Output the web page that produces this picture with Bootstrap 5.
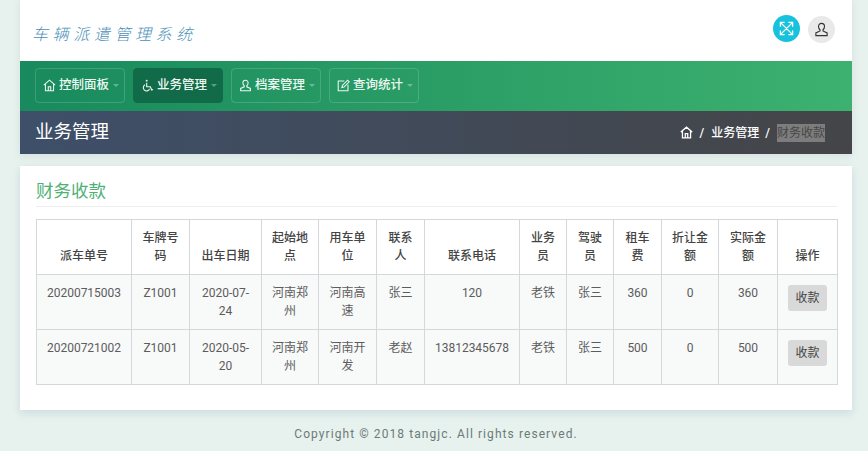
<!DOCTYPE html>
<html lang="zh-CN">

<head>
    <meta charset="UTF-8">
    <meta name="viewport" content="width=device-width, initial-scale=1.0">
    <title>财务收款</title>
    <link href="https://cdn.jsdelivr.net/npm/bootstrap@5.3.0/dist/css/bootstrap.min.css" rel="stylesheet">
    <style>
        html, body { height: 451px; overflow: hidden; }
        body {
            background: #e7f2ee;
            font-family: Roboto, "Noto Sans CJK SC", sans-serif;
            font-size: 12px;
            line-height: 18px;
            color: #555;
        }
        .page-wrap { padding: 0 16px 0 20px; }
        .top-box { box-shadow: 0 2px 8px rgba(120, 150, 160, .18); }
        .logo-bar { height: 61px; background: #fff; padding: 0 17px 0 12px; }
        .logo-text {
            font-family: "Noto Sans CJK SC", sans-serif;
            font-size: 16px;
            font-weight: 300;
            font-style: italic;
            letter-spacing: 4.6px;
            line-height: 20px;
            color: #4b8fb9;
            margin-top: 5px;
        }
        .round-btn {
            width: 27px; height: 27px; padding: 0; border: 0; border-radius: 50%;
            display: flex; align-items: center; justify-content: center;
        }
        .round-cyan { background: #17c2dd; margin-top: -5px; }
        .round-grey { background: #e9e9e9; margin-top: -3px; }
        .menu-bar {
            height: 50px;
            padding: 7px 15px;
            gap: 8px;
            background: linear-gradient(90deg, #188a5d, #3db16f);
        }
        .menu-btn {
            width: 90px; height: 35px;
            padding: 0 0 0 7px;
            gap: 3px;
            color: #eef8f3;
            font-size: 12.5px;
            font-weight: 500;
            border: 1px solid rgba(255, 255, 255, .16);
            border-radius: 4px;
        }
        .menu-btn:hover { color: #fff; }
        .menu-on { background: #116b48; border-color: #116b48; }
        .menu-btn.dropdown-toggle::after {
            margin-left: 1px;
            border-top-width: 3px; border-left-width: 3px; border-right-width: 3px;
            opacity: .35;
        }
        .title-bar {
            height: 43px;
            padding: 0 27px 0 15px;
            background: linear-gradient(90deg, #3e4f69, #444548);
            color: #fff;
        }
        .title-text { font-size: 18.5px; font-weight: 400; margin: 0 0 2px; line-height: 24px; }
        .crumb-list { margin: 0; font-size: 12px; font-weight: 500; --bs-breadcrumb-divider-color: #fff; }
        .crumb-list .breadcrumb-item { padding-left: 7px; color: #fff; }
        .crumb-list .breadcrumb-item::before { color: #fff; padding-right: 7px; }
        .crumb-list a { color: #fff; text-decoration: none; }
        .crumb-now { background: #7d7d7d; color: #474747; font-weight: 400; display: inline-block; }
        .crumb-list .breadcrumb-item:last-child { padding-left: 6px; }
        .main-box {
            margin-top: 12px;
            height: 244px;
            border: 0;
            border-radius: 0;
            padding: 14px 15px 0 16px;
            box-shadow: 0 3px 8px rgba(120, 150, 180, .25);
        }
        .box-title {
            font-size: 17.5px;
            line-height: 22px;
            font-weight: 400;
            color: #4fb077;
            margin: 0;
            padding-bottom: 4px;
            border-bottom: 1px solid #eee;
        }
        .pay-table {
            margin: 12px 0 0;
            table-layout: fixed;
            width: 801px;
            text-align: center;
            --bs-border-color: #d5d8d8;
        }
        .pay-table th, .pay-table td { padding: 9px 7px; line-height: 18px; font-size: 12px; }
        .pay-table thead th { vertical-align: bottom; font-weight: 500; color: #444; background: #fff; }
        .pay-table tbody td { background: #f8f9f9; color: #5c5c5c; vertical-align: top; height: 55px; }
        .pay-btn {
            background: #d9d9d9; color: #444; border: 0; border-radius: 3px;
            font-size: 12px; line-height: 18px; padding: 4px 7.5px; margin-top: 1px;
        }
        .col-a { width: 95px; } .col-b { width: 58px; } .col-c { width: 72px; }
        .col-d { width: 57px; } .col-e { width: 58px; } .col-f { width: 48px; }
        .col-g { width: 95px; } .col-h { width: 47px; } .col-i { width: 47px; }
        .col-j { width: 48px; } .col-k { width: 57px; } .col-l { width: 59px; }
        .col-m { width: 60px; }
        .foot-text { margin-top: 15px; letter-spacing: 1.08px; color: #6c7a78; text-align: center; }
    </style>
</head>

<body>
    <div class="page-wrap">
        <div class="top-box">
            <div class="logo-bar d-flex align-items-center justify-content-between">
                <div class="logo-text">车辆派遣管理系统</div>
                <div class="d-flex gap-2 align-items-center">
                    <button class="round-btn round-cyan" type="button" aria-label="全屏">
                        <svg width="15" height="15" viewBox="0 0 16 16" fill="none" stroke="#fff" stroke-width="1.4">
                            <path d="M1.5 6V1.5H6M10 1.5h4.5V6M14.5 10v4.5H10M6 14.5H1.5V10M2 2l12 12M14 2L2 14" />
                        </svg>
                    </button>
                    <button class="round-btn round-grey" type="button" aria-label="用户">
                        <svg width="15" height="15" viewBox="0 0 16 16" fill="none" stroke="#333" stroke-width="1.2">
                            <path d="M8 1.5c-2 0-3.2 1.4-3.2 3.4 0 1.5.7 2.7 1.6 3.4v1.3L2 11.6V14.5h12v-2.9l-4.4-2V8.3c.9-.7 1.6-1.9 1.6-3.4 0-2-1.2-3.4-3.2-3.4z" />
                        </svg>
                    </button>
                </div>
            </div>

            <div class="menu-bar d-flex">
                <a class="btn menu-btn d-flex align-items-center dropdown-toggle" href="#">
                    <svg width="13" height="13" viewBox="0 0 16 16" fill="none" stroke="currentColor" stroke-width="1.3">
                        <path d="M1 7.5L8 1.5l7 6M3 6v8.5h10V6M6.5 14.5V9.5h3v5" />
                    </svg>控制面板
                </a>
                <a class="btn menu-btn menu-on d-flex align-items-center dropdown-toggle" href="#">
                    <svg width="13" height="13" viewBox="0 0 16 16" fill="none" stroke="currentColor" stroke-width="1.4">
                        <circle cx="7" cy="2" r="1.2" fill="currentColor" stroke="none" />
                        <path d="M7 4.5v5h4.5l1.7 4 1.6-.6M5 7.2a4 4 0 1 0 5.6 5" />
                    </svg>业务管理
                </a>
                <a class="btn menu-btn d-flex align-items-center dropdown-toggle" href="#">
                    <svg width="13" height="13" viewBox="0 0 16 16" fill="none" stroke="currentColor" stroke-width="1.3">
                        <path d="M8 1.5c-2 0-3.2 1.4-3.2 3.4 0 1.5.7 2.7 1.6 3.4v1.3L2 11.6V14.5h12v-2.9l-4.4-2V8.3c.9-.7 1.6-1.9 1.6-3.4 0-2-1.2-3.4-3.2-3.4z" />
                    </svg>档案管理
                </a>
                <a class="btn menu-btn d-flex align-items-center dropdown-toggle" href="#">
                    <svg width="13" height="13" viewBox="0 0 16 16" fill="none" stroke="currentColor" stroke-width="1.3">
                        <path d="M9 2.5H1.5v12h12V7M6 10.5l.6-2.6L13 1.5l2 2-6.4 6.4z" />
                    </svg>查询统计
                </a>
            </div>

            <div class="title-bar d-flex align-items-center justify-content-between">
                <h1 class="title-text">业务管理</h1>
                <ol class="breadcrumb crumb-list align-items-center">
                    <li class="breadcrumb-item d-flex align-items-center">
                        <a href="#" class="d-flex" aria-label="首页">
                            <svg width="13" height="13" viewBox="0 0 16 16" fill="none" stroke="#fff" stroke-width="1.6">
                                <path d="M1 7.5L8 1.5l7 6M3 6v8.5h10V6M6.5 14.5V9.5h3v5" />
                            </svg>
                        </a>
                    </li>
                    <li class="breadcrumb-item"><a href="#">业务管理</a></li>
                    <li class="breadcrumb-item"><span class="crumb-now">财务收款</span></li>
                </ol>
            </div>
        </div>

        <div class="card main-box">
            <h2 class="box-title">财务收款</h2>
            <table class="table table-bordered pay-table">
                <colgroup>
                    <col class="col-a"><col class="col-b"><col class="col-c"><col class="col-d"><col class="col-e">
                    <col class="col-f"><col class="col-g"><col class="col-h"><col class="col-i"><col class="col-j">
                    <col class="col-k"><col class="col-l"><col class="col-m">
                </colgroup>
                <thead>
                    <tr>
                        <th>派车单号</th>
                        <th>车牌号码</th>
                        <th>出车日期</th>
                        <th>起始地点</th>
                        <th>用车单位</th>
                        <th>联系人</th>
                        <th>联系电话</th>
                        <th>业务员</th>
                        <th>驾驶员</th>
                        <th>租车费</th>
                        <th>折让金额</th>
                        <th>实际金额</th>
                        <th>操作</th>
                    </tr>
                </thead>
                <tbody>
                    <tr>
                        <td>20200715003</td>
                        <td>Z1001</td>
                        <td>2020-07-24</td>
                        <td>河南郑州</td>
                        <td>河南高速</td>
                        <td>张三</td>
                        <td>120</td>
                        <td>老铁</td>
                        <td>张三</td>
                        <td>360</td>
                        <td>0</td>
                        <td>360</td>
                        <td><button class="btn pay-btn" type="button">收款</button></td>
                    </tr>
                    <tr>
                        <td>20200721002</td>
                        <td>Z1001</td>
                        <td>2020-05-20</td>
                        <td>河南郑州</td>
                        <td>河南开发</td>
                        <td>老赵</td>
                        <td>13812345678</td>
                        <td>老铁</td>
                        <td>张三</td>
                        <td>500</td>
                        <td>0</td>
                        <td>500</td>
                        <td><button class="btn pay-btn" type="button">收款</button></td>
                    </tr>
                </tbody>
            </table>
        </div>

        <div class="foot-text">Copyright © 2018 tangjc. All rights reserved.</div>
    </div>
</body>

</html>
